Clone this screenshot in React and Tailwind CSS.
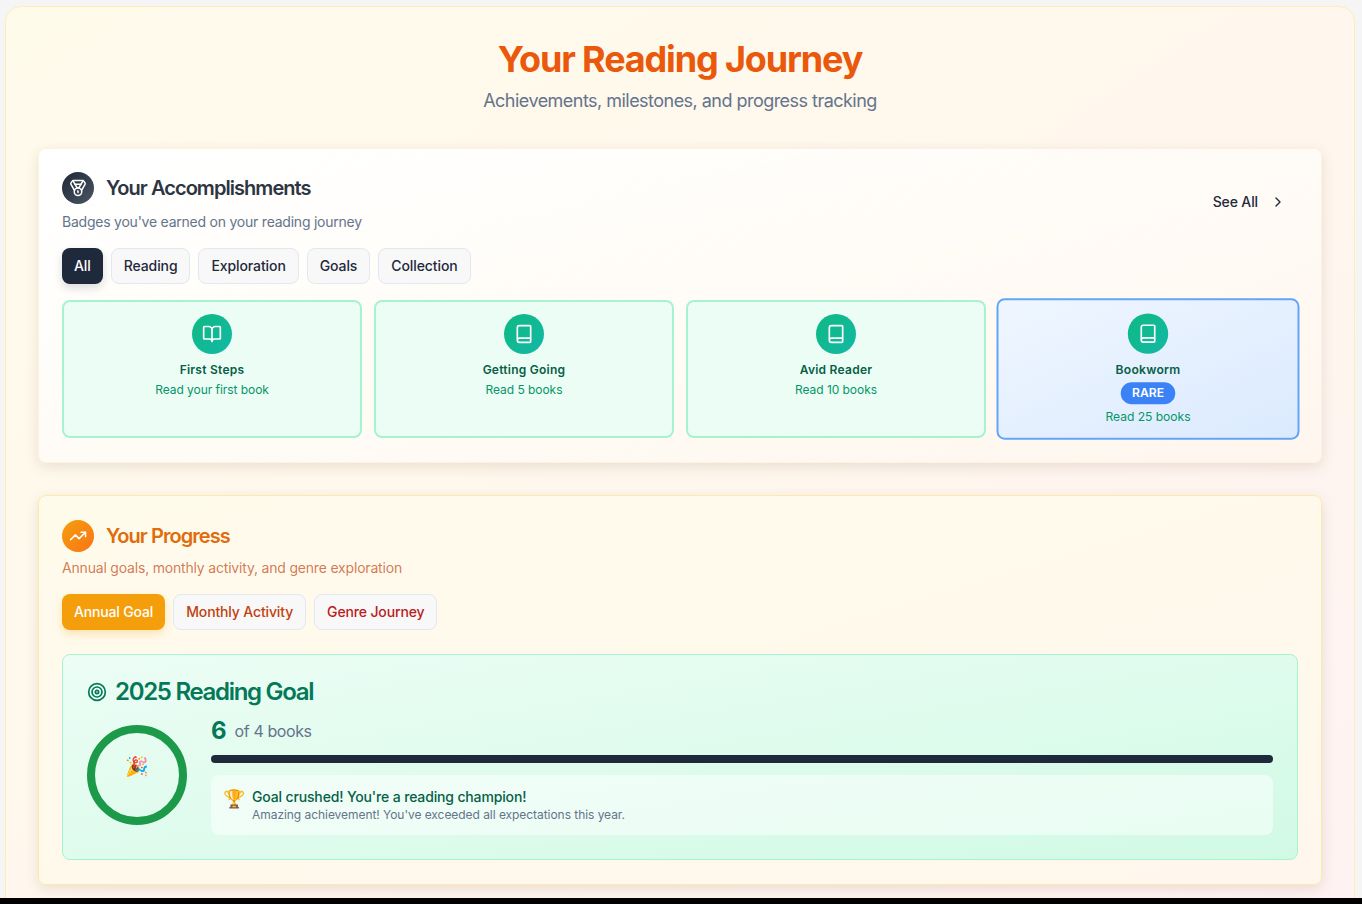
import React from "react";
import { Medal, BookOpen, Book, ChevronRight, TrendingUp, Target } from "lucide-react";

function Tab({ children, active }) {
  return (
    <button
      className={
        active
          ? "h-9 px-3 rounded-lg text-sm font-medium text-white bg-[#1e293b] tracking-[-0.1px] shadow-[0_4px_8px_rgba(15,23,42,0.15)]"
          : "h-9 px-3 rounded-lg text-sm font-medium text-[#1e293b] bg-[#f8f8f8] border border-[#e2e8f0] tracking-[-0.1px]"
      }
    >
      {children}
    </button>
  );
}

function Badge({ icon: Icon, name, desc, rare }) {
  return (
    <div
      className={
        rare
          ? "-my-px flex flex-col items-center rounded-lg border-2 border-[#60a5fa] bg-gradient-to-br from-[#eff6ff] to-[#dbeafe] pt-[13px] pb-[13px] px-3 scale-[1.01]"
          : "flex flex-col items-center rounded-lg border-2 border-[#a7f3d0] bg-[#ecfdf5] pt-3 pb-[13px] px-3"
      }
    >
      <div className="w-10 h-10 rounded-full flex items-center justify-center bg-gradient-to-br from-[#10b981] to-[#14b8a6]">
        <Icon size={20} color="#fff" strokeWidth={2} />
      </div>
      <div className="mt-2 text-xs leading-4 font-semibold text-[#065f46] tracking-[0.25px]">{name}</div>
      {rare && (
        <div className="mt-[4px] h-[22px] w-[54px] rounded-full bg-[#3b82f6] text-white text-xs font-semibold flex items-center justify-center">
          RARE
        </div>
      )}
      <div className={(rare ? "mt-[3.5px] " : "mt-[4px] ") + "text-xs leading-4 text-[#059669] tracking-[-0.05px]"}>{desc}</div>
    </div>
  );
}

export default function App() {
  return (
    <div className="h-[904px] overflow-hidden flex flex-col bg-[#f5f5f5] font-['Inter',sans-serif]">
      <div className="h-[898px] overflow-hidden shrink-0 pt-[6px] pl-[5px] pr-[7px]">
        <div className="rounded-2xl border border-[#fdeeb8] bg-gradient-to-br from-[#fffbeb] via-[#fff7ed] to-[#fef2f2] px-8 pt-8 pb-8">
          <h1 className="text-4xl leading-10 font-bold text-center text-[#ea580c] tracking-[-1.15px]">Your Reading Journey</h1>
          <p className="mt-2 text-lg leading-7 text-center text-[#64748b] tracking-[-0.53px]">Achievements, milestones, and progress tracking</p>

          <section className="mt-[33px] rounded-lg border border-[#ffedd5]/70 bg-gradient-to-br from-white to-[#fff7ed]/60 px-[23px] pt-[23px] pb-6 shadow-[0_4px_14px_rgba(80,50,20,0.12)]">
            <div className="flex items-center justify-between">
              <div>
                <div className="flex items-center gap-3">
                  <div className="w-8 h-8 rounded-full flex items-center justify-center bg-gradient-to-br from-[#1f2937] to-[#4b5563]">
                    <Medal size={18} color="#fff" strokeWidth={2} />
                  </div>
                  <h2 className="text-xl font-semibold text-[#2d3542] tracking-[-0.95px]">Your Accomplishments</h2>
                </div>
                <p className="mt-2 text-sm text-[#64748b] tracking-[-0.23px]">Badges you've earned on your reading journey</p>
              </div>
              <button className="h-9 px-3 flex items-center gap-3 text-sm font-medium text-[#1e293b] tracking-[-0.12px]">
                See All
                <ChevronRight size={16} />
              </button>
            </div>
            <div className="mt-4 flex gap-2">
              <Tab active>All</Tab>
              <Tab>Reading</Tab>
              <Tab>Exploration</Tab>
              <Tab>Goals</Tab>
              <Tab>Collection</Tab>
            </div>
            <div className="mt-4 grid grid-cols-4 gap-3">
              <Badge icon={BookOpen} name="First Steps" desc="Read your first book" />
              <Badge icon={Book} name="Getting Going" desc="Read 5 books" />
              <Badge icon={Book} name="Avid Reader" desc="Read 10 books" />
              <Badge icon={Book} name="Bookworm" desc="Read 25 books" rare />
            </div>
          </section>

          <section className="mt-8 rounded-lg border border-[#fde9ae] bg-gradient-to-br from-[#fffbeb] to-[#fff7ed] px-[23px] pt-6 pb-6 shadow-[0_4px_14px_rgba(80,50,20,0.12)]">
            <div className="flex items-center gap-3">
              <div className="w-8 h-8 rounded-full flex items-center justify-center bg-gradient-to-br from-[#f59e0b] to-[#f97316]">
                <TrendingUp size={18} color="#fff" strokeWidth={2} />
              </div>
              <h2 className="text-xl font-semibold text-[#e06c0a] tracking-[-0.95px]">Your Progress</h2>
            </div>
            <p className="mt-[6px] text-sm text-[#c2410c]/70 tracking-[-0.19px]">Annual goals, monthly activity, and genre exploration</p>
            <div className="mt-4 flex gap-2">
              <button className="h-9 px-3 rounded-lg text-sm font-medium text-white bg-[#f59e0b] tracking-[-0.16px] shadow-[0_4px_8px_rgba(245,158,11,0.25)]">Annual Goal</button>
              <button className="h-9 px-3 rounded-lg text-sm font-medium text-[#c2410c] bg-[#f8f8f8] border border-[#e2e8f0] tracking-[-0.14px]">Monthly Activity</button>
              <button className="h-9 px-3 rounded-lg text-sm font-medium text-[#b91c1c] bg-[#f8f8f8] border border-[#e2e8f0] tracking-[-0.14px]">Genre Journey</button>
            </div>

            <div className="mt-6 rounded-lg border border-[#a7f3d0] bg-gradient-to-br from-[#ecfdf5] to-[#d1fae5] p-6">
              <div className="flex items-center gap-2 mb-[10px]">
                <Target size={20} color="#047857" strokeWidth={2} />
                <h3 className="text-2xl leading-[26px] font-semibold text-[#047857] tracking-[-1.3px]">2025 Reading Goal</h3>
              </div>
              <div className="flex items-center gap-6">
                <div className="w-[100px] h-[100px] shrink-0 rounded-full border-8 border-[#1c9a4a] flex justify-center pt-[22px]">
                  <span className="text-[19px] leading-6 font-['Noto_Color_Emoji',sans-serif]">🎉</span>
                </div>
                <div className="flex-1 min-w-0">
                  <div className="flex items-center gap-2 h-[33px]">
                    <span className="text-2xl font-bold text-[#047857]">6</span>
                    <span className="text-base text-[#64748b] tracking-[-0.4px]">of 4 books</span>
                  </div>
                  <div className="mt-[7px] h-2 rounded-full bg-[#1e293b]" />
                  <div className="mt-3 rounded-lg bg-white/50 p-3 flex items-start gap-[9px]">
                    <span className="w-5 shrink-0 text-[18px] leading-6 font-['Noto_Color_Emoji',sans-serif]">🏆</span>
                    <div>
                      <div className="text-sm font-medium text-[#065f46] tracking-[-0.15px]">Goal crushed! You're a reading champion!</div>
                      <div className="text-xs text-[#64748b] tracking-[-0.05px]">Amazing achievement! You've exceeded all expectations this year.</div>
                    </div>
                  </div>
                </div>
              </div>
            </div>
          </section>
        </div>
      </div>
      <div className="flex-1 bg-black" />
    </div>
  );
}
